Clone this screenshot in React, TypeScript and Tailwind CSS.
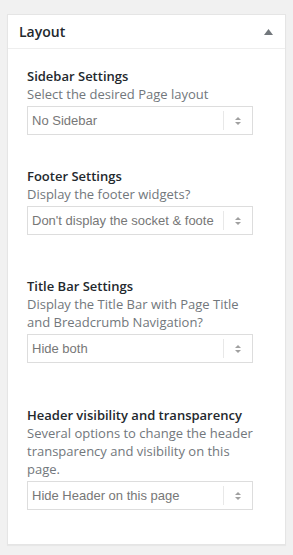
import React from 'react';

interface Field {
  label: string;
  description: string;
  value: string;
  gap: string;
}

const fields: Field[] = [
  {
    label: 'Sidebar Settings',
    description: 'Select the desired Page layout',
    value: 'No Sidebar',
    gap: 'mt-0',
  },
  {
    label: 'Footer Settings',
    description: 'Display the footer widgets?',
    value: "Don't display the socket & foote",
    gap: 'mt-[32px]',
  },
  {
    label: 'Title Bar Settings',
    description: 'Display the Title Bar with Page Title and Breadcrumb Navigation?',
    value: 'Hide both',
    gap: 'mt-[42px]',
  },
  {
    label: 'Header visibility and transparency',
    description: 'Several options to change the header transparency and visibility on this page.',
    value: 'Hide Header on this page',
    gap: 'mt-[43px]',
  },
];

const SelectBox = ({ value }: { value: string }) => (
  <div className="mt-[3px] flex h-[29px] w-[226px] items-center border border-[#dddddd] bg-white">
    <span className="flex-1 whitespace-nowrap pl-[4px] font-['Liberation_Sans',Arial,sans-serif] text-[13px] text-[#777777]">
      {value}
    </span>
    <span className="h-[19px] w-px bg-[#e8e8e8]" />
    <span className="flex w-[28px] flex-col items-center gap-[2px]">
      <svg width="6" height="3" viewBox="0 0 6 3">
        <path d="M0 3 L3 0 L6 3 Z" fill="#a0a0a0" />
      </svg>
      <svg width="6" height="3" viewBox="0 0 6 3">
        <path d="M0 0 L3 3 L6 0 Z" fill="#a0a0a0" />
      </svg>
    </span>
  </div>
);

export default function App() {
  return (
    <div className="min-h-[555px] w-[293px] bg-[#f1f1f1] pt-[14px] pl-[7px] font-['Open_Sans',sans-serif]">
      <div className="w-[279px] border border-[#e5e5e5] bg-white shadow-[0_1px_1px_rgba(0,0,0,0.04)]">
        {/* Box header */}
        <div className="flex h-[34px] items-center justify-between border-b border-[#eeeeee] pl-[11px] pr-[12px]">
          <h2 className="text-[14px] font-semibold text-[#23282d]">Layout</h2>
          <svg width="9" height="6" viewBox="0 0 9 6" className="mt-[1px]">
            <path d="M0 6 L4.5 0 L9 6 Z" fill="#72777c" />
          </svg>
        </div>

        {/* Fields */}
        <div className="px-[19px] pt-[18px] pb-[34px]">
          {fields.map(field => (
            <div key={field.label} className={field.gap}>
              <div className="text-[13px] font-semibold leading-[18px] text-[#23282d]">{field.label}</div>
              <p className="w-[232px] text-[13px] leading-[18px] text-[#72777c]">{field.description}</p>
              <SelectBox value={field.value} />
            </div>
          ))}
        </div>
      </div>
    </div>
  );
}
